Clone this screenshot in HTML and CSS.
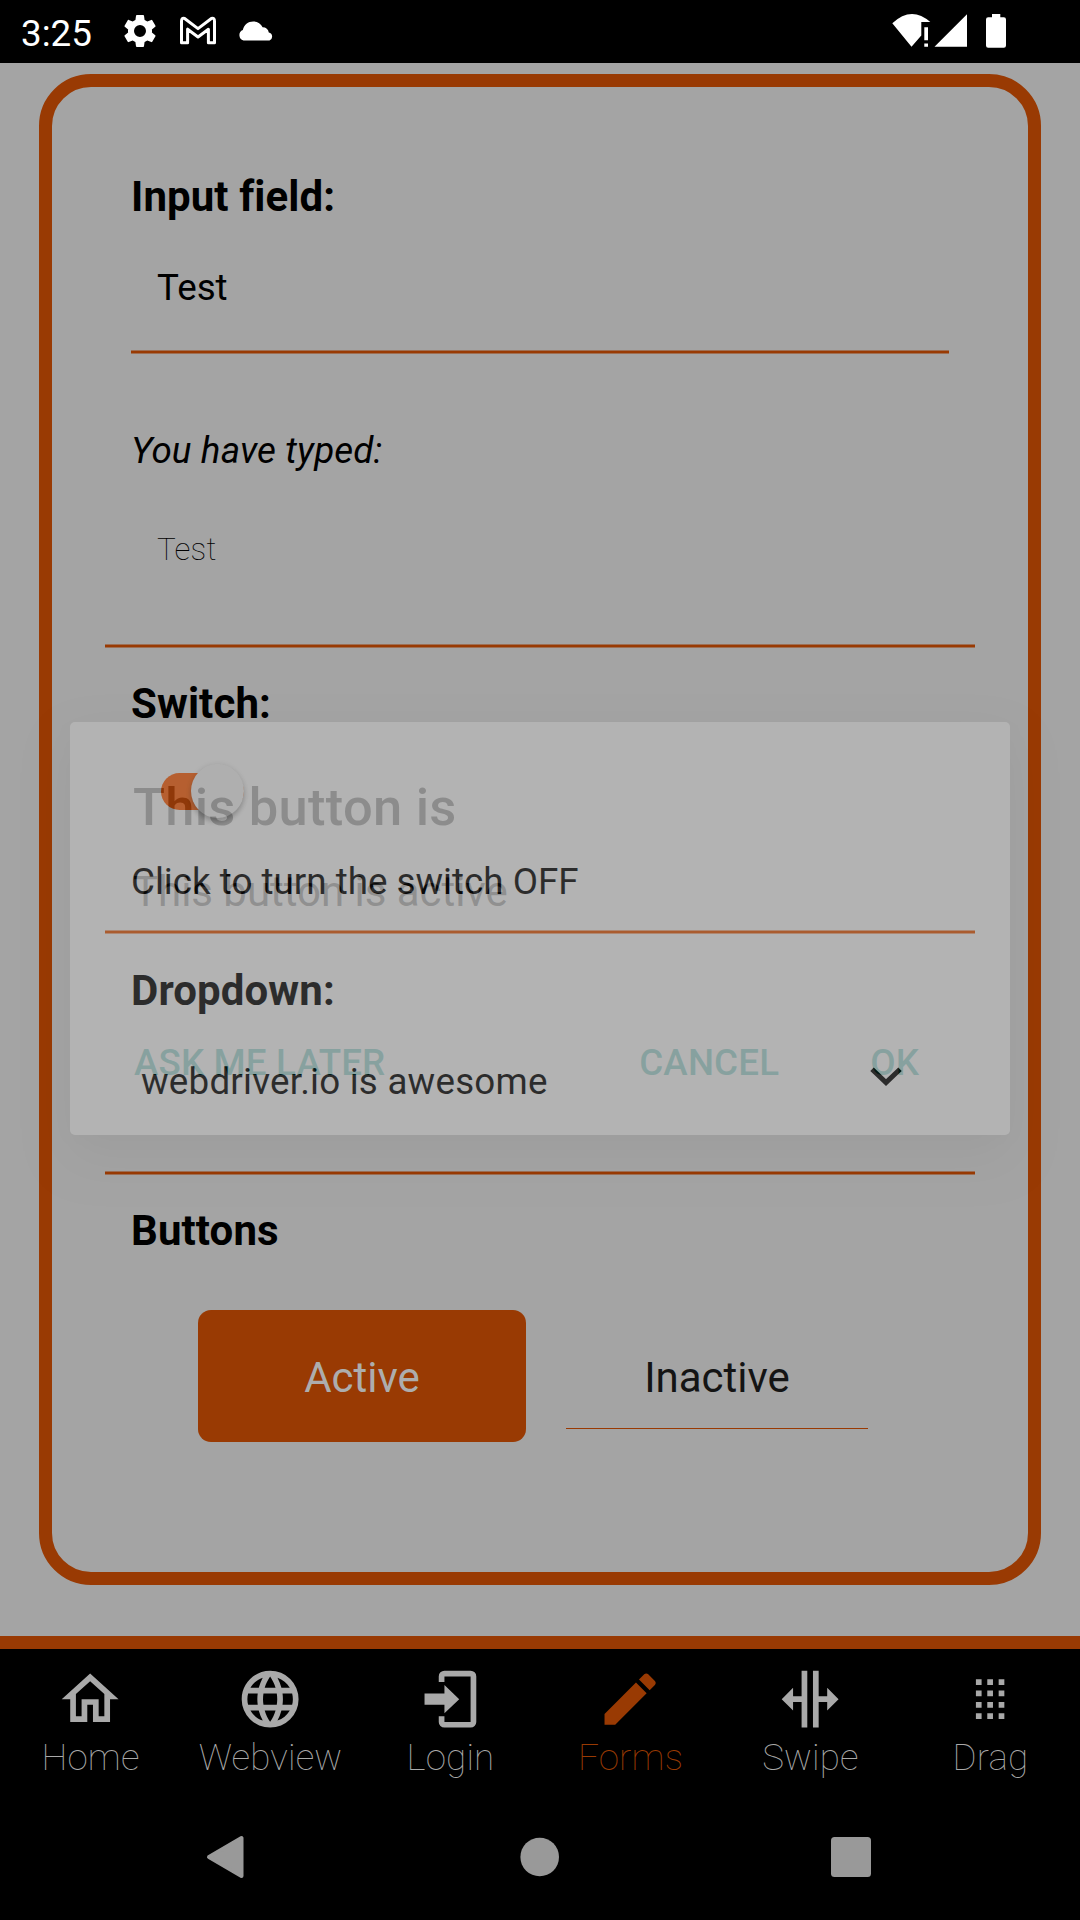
FILE: index.html
```html
<!DOCTYPE html>
<html lang="en">
<head>
<meta charset="utf-8">
<title>Forms</title>
<link rel="stylesheet" href="styles.css">
</head>
<body>
<div class="screen">
  <header class="status">
    <span class="time">3:25</span>
    <svg class="st-gear" width="40" height="40" viewBox="0 0 24 24"><path fill="#fff" fill-rule="evenodd" d="M19.14 12.94c.04-.3.06-.61.06-.94 0-.32-.02-.64-.07-.94l2.03-1.58a.49.49 0 0 0 .12-.61l-1.92-3.32a.488.488 0 0 0-.59-.22l-2.39.96c-.5-.38-1.03-.7-1.62-.94l-.36-2.54a.484.484 0 0 0-.48-.41h-3.84c-.24 0-.43.17-.47.41l-.36 2.54c-.59.24-1.13.57-1.62.94l-2.39-.96c-.22-.08-.47 0-.59.22L2.74 8.87c-.12.21-.08.47.12.61l2.03 1.58c-.05.3-.09.63-.09.94s.02.64.07.94l-2.03 1.58a.49.49 0 0 0-.12.61l1.92 3.32c.12.22.37.29.59.22l2.39-.96c.5.38 1.03.7 1.62.94l.36 2.54c.05.24.24.41.48.41h3.84c.24 0 .44-.17.47-.41l.36-2.54c.59-.24 1.13-.56 1.62-.94l2.39.96c.22.08.47 0 .59-.22l1.92-3.32c.12-.22.07-.47-.12-.61l-2.01-1.58zM12 15.6A3.6 3.6 0 1 1 12 8.4a3.6 3.6 0 0 1 0 7.2z"/></svg>
    <svg class="st-mail" width="38" height="30" viewBox="0 0 38 30"><path fill="none" stroke="#fff" stroke-width="3" stroke-linejoin="round" d="M2.500 5.200Q2.500 1.500 5.600 2.500L19 12.600 32.400 2.500Q35.500 1.500 35.500 5.200V26.800H29.400V13.200L19 21 8.600 13.200V26.800H2.500Z"/></svg>
    <svg class="st-cloud" width="36" height="20" viewBox="0 0 36 20"><path fill="#fff" d="M5.500 19.500A5.500 5.500 0 0 1 4.800 9.100C6 3.700 10 .4 15.200 .4C19.600 .4 22.800 2.700 24.600 6.300C28 6.300 30.300 8.300 30.800 11.500A4.200 4.200 0 0 1 31.500 19.500Z"/></svg>
    <svg class="st-signals" width="120" height="40" viewBox="890 11 120 40"><g fill="#fff"><path d="M892.300 23.200Q911.500 5.300 930.300 22H921.300V35.600L911.500 46.800Z"/><path d="M924.300 27.300h3.700v13h-3.700zM924.300 43.500h3.700v3.300h-3.700zM934.500 46.800L967 14.200V46.800Z"/><path d="M992 14h8.300v3.300h3.500q2.200 0 2.200 2.200V45.600q0 2.200-2.200 2.200H988.200q-2.200 0-2.200-2.200V19.500q0-2.200 2.200-2.200H992Z"/></g></svg>
  </header>

  <main class="page">
    <section class="card">
      <h2 class="label label-input">Input field:</h2>
      <div class="input">Test</div>
      <p class="typed">You have typed:</p>
      <p class="typed-value">Test</p>
      <hr class="rule rule-typed">
      <h2 class="label">Switch:</h2>
      <div class="toggle"><span class="thumb"></span></div>
      <p class="hint">Click to turn the switch OFF</p>
      <hr class="rule rule-hint">
      <h2 class="label label-dropdown">Dropdown:</h2>
      <div class="select"><span>webdriver.io is awesome</span>
        <svg width="32" height="20" viewBox="0 0 32 20"><path fill="none" stroke="#000" stroke-width="5" d="M2 2.300L16 15.600 30 2.300"/></svg>
      </div>
      <hr class="rule rule-select">
      <h2 class="label">Buttons</h2>
      <div class="buttons">
        <div class="btn btn-active">Active</div>
        <div class="btn btn-inactive">Inactive</div>
      </div>
    </section>
  </main>

  <nav class="tabs">
    <div class="tab"><svg viewBox="0 0 24 24"><path d="M12 5.690L17 10.190V18H15V12H9V18H7V10.190L12 5.690M12 3L2 12H5V20H11V14H13V20H19V12H22"/></svg><span>Home</span></div>
    <div class="tab"><svg viewBox="0 0 24 24"><path d="M16.360,14C16.440,13.340 16.500,12.680 16.500,12C16.500,11.320 16.440,10.660 16.360,10H19.740C19.900,10.640 20,11.310 20,12C20,12.690 19.900,13.360 19.740,14M14.590,19.560C15.190,18.450 15.650,17.250 15.970,16H18.920C17.960,17.650 16.430,18.930 14.590,19.560M14.340,14H9.660C9.560,13.340 9.500,12.680 9.500,12C9.500,11.320 9.560,10.650 9.660,10H14.340C14.430,10.650 14.500,11.320 14.500,12C14.500,12.680 14.430,13.340 14.340,14M12,19.960C11.170,18.760 10.500,17.430 10.090,16H13.910C13.500,17.430 12.830,18.760 12,19.960M8,8H5.080C6.030,6.340 7.570,5.060 9.400,4.440C8.800,5.550 8.350,6.750 8,8M5.080,16H8C8.350,17.250 8.800,18.450 9.400,19.560C7.570,18.930 6.030,17.650 5.080,16M4.260,14C4.100,13.360 4,12.690 4,12C4,11.310 4.100,10.640 4.260,10H7.640C7.560,10.660 7.500,11.320 7.500,12C7.500,12.680 7.560,13.340 7.640,14M12,4.030C12.830,5.230 13.500,6.570 13.910,8H10.090C10.500,6.570 11.170,5.230 12,4.030M18.920,8H15.970C15.650,6.750 15.190,5.550 14.590,4.440C16.430,5.070 17.960,6.340 18.920,8M12,2C6.470,2 2,6.500 2,12A10,10 0 0,0 12,22A10,10 0 0,0 22,12A10,10 0 0,0 12,2Z"/></svg><span>Webview</span></div>
    <div class="tab"><svg viewBox="0 0 24 24"><path d="M10 17V14H3V10H10V7L15.200 12L10 17M10 2H19.200A2 2 0 0 1 21.200 4V20A2 2 0 0 1 19.200 22H10A2 2 0 0 1 8 20V18H10V20H19.200V4H10V6H8V4A2 2 0 0 1 10 2Z"/></svg><span>Login</span></div>
    <div class="tab tab-on"><svg viewBox="0 0 24 24"><path d="M20.710,7.040C21.100,6.650 21.100,6 20.710,5.630L18.370,3.290C18,2.900 17.350,2.900 16.960,3.290L15.120,5.120L18.870,8.870M3,17.250V21H6.750L17.810,9.930L14.060,6.180L3,17.250Z"/></svg><span>Forms</span></div>
    <div class="tab"><svg viewBox="0 0 24 24"><path d="M18,16V13H15V22H13V2H15V11H18V8L22,12L18,16M2,12L6,16V13H9V22H11V2H9V11H6V8L2,12Z"/></svg><span>Swipe</span></div>
    <div class="tab"><svg viewBox="0 0 24 24"><path d="M7 5h2v2H7zM11 5h2v2h-2zM15 5h2v2h-2zM7 9h2v2H7zM11 9h2v2h-2zM15 9h2v2h-2zM7 13h2v2H7zM11 13h2v2h-2zM15 13h2v2h-2zM7 17h2v2H7zM11 17h2v2h-2zM15 17h2v2h-2z"/></svg><span>Drag</span></div>
  </nav>

  <footer class="system">
    <svg width="40" height="44" viewBox="0 0 40 44"><path fill="#999" stroke="#999" stroke-width="4" stroke-linejoin="round" d="M3 22L35.500 3V41Z"/></svg>
    <svg width="40" height="40" viewBox="0 0 40 40"><circle cx="20.700" cy="20" r="19.300" fill="#999"/></svg>
    <svg width="40" height="40" viewBox="0 0 40 40"><rect width="40" height="40" rx="3.500" fill="#999"/></svg>
  </footer>

  <div class="dialog">
    <div class="dialog-title">This button is</div>
    <div class="dialog-text">This button is active</div>
    <div class="dialog-actions"><span class="later">ASK ME LATER</span><span>CANCEL</span><span>OK</span></div>
  </div>
</div>
</body>
</html>
```
FILE: styles.css
```css
* { box-sizing: border-box; margin: 0; padding: 0; }
body { background: #000; font-family: Roboto, "Liberation Sans", sans-serif; }
svg { display: block; flex: none; }

.screen {
  position: relative;
  display: flex;
  flex-direction: column;
  width: 1080px;
  height: 1920px;
  overflow: hidden;
  background: #000;
  color: #000;
  font-size: 36.75px;
  line-height: 44px;
}

/* Status bar */
.status { display: flex; align-items: flex-start; height: 63px; color: #fff; }
.time { width: 98px; padding-left: 21px; margin-top: 12px; white-space: nowrap; }
.st-gear { margin: 11px 0 0 22px; }
.st-mail { margin: 16px 0 0 19px; }
.st-cloud { margin: 21px 0 0 21px; }
.st-signals { margin: 11px 70px 0 auto; }

/* Form page */
.page { height: 1573px; padding: 11px 39px 0; background: #a4a4a4; }
.card {
  height: 1511px;
  padding: 85px 53px 0;
  border: 13px solid #993a03;
  border-radius: 52px;
}
.label { margin: 31px 26px 0; font-size: 42px; line-height: 50px; font-weight: 700; letter-spacing: .1px; }
.label-input { margin-top: 0; }
.label-dropdown { margin-top: 32px; }
.input {
  height: 88px;
  margin: 44px 26px 0;
  padding-left: 26px;
  background: linear-gradient(#9e6f54 0 1px, #993a03 1px 3px, #9e6f54 3px) bottom / 100% 4px no-repeat;
}
.typed { margin: 75px 26px 0; font-style: italic; letter-spacing: .15px; }
.typed-value { margin: 57px 52px 0; font-size: 31.5px; line-height: 40px; font-weight: 100; letter-spacing: .2px; }
.rule {
  height: 4px;
  border: 0;
  background: linear-gradient(#9e6f54 0 1px, #993a03 1px 3px, #9e6f54 3px);
}
.rule-typed { margin-top: 74px; }
.toggle {
  width: 83px;
  height: 37px;
  margin: 44px 0 0 56px;
  border-radius: 19px;
  background: #a73e05;
  display: flex;
  align-items: center;
  justify-content: flex-end;
}
.thumb {
  width: 53px;
  height: 54px;
  margin-top: -2px;
  border-radius: 50%;
  background: #9f9f9f;
  box-shadow: 0 4px 5px rgba(0, 0, 0, .25), 0 0 6px rgba(0, 0, 0, .1);
}
.hint { margin: 50px 26px 0; }
.rule-hint { margin-top: 26px; }
.select { display: flex; justify-content: space-between; margin: 44px 73px 0 36px; letter-spacing: .22px; }
.select svg { margin-top: 7px; }
.rule-select { margin-top: 67px; }
.buttons { display: flex; gap: 40px; margin: 54px 0 0 93px; font-size: 42px; }
.btn { text-align: center; }
.btn-active {
  width: 328px;
  height: 132px;
  padding-top: 46px;
  border-radius: 13px;
  background: #993a03;
  color: #adadad;
}
.btn-inactive {
  width: 302px;
  height: 119px;
  padding-top: 46px;
  border-bottom: 1px solid #993a03;
  color: #141414;
}

/* Tab bar */
.tabs {
  display: grid;
  grid-template-columns: repeat(6, 180px);
  height: 158px;
  border-top: 13px solid #993a03;
  color: #a9a9a9;
}
.tab { display: flex; flex-direction: column; align-items: center; padding: 16px 0 0 1px; font-weight: 100; letter-spacing: .15px; }
.tab svg { width: 68.25px; height: 68.25px; fill: currentColor; }
.tab span { margin-top: 2.75px; }
.tab-on { color: #993a03; }

/* System navigation */
.system {
  display: flex;
  align-items: center;
  justify-content: space-between;
  height: 126px;
  padding: 0 209px 0 206px;
}

/* Alert fading in above the form */
.dialog {
  position: absolute;
  left: 70px;
  top: 722px;
  width: 940px;
  height: 413px;
  padding: 54px 63px 0;
  border-radius: 5px;
  background: #fff;
  box-shadow: 0 22px 50px rgba(0, 0, 0, .22), 0 0 20px rgba(0, 0, 0, .06);
  opacity: .172;
}
.dialog-title { font-size: 52.5px; line-height: 62px; font-weight: 500; color: #212121; letter-spacing: .25px; }
.dialog-text { margin-top: 29px; font-size: 42px; line-height: 50px; color: #333; letter-spacing: -.03px; }
.dialog-actions {
  display: flex;
  gap: 91px;
  margin: 124px 0 0 1px;
  padding-right: 28px;
  font-weight: 500;
  letter-spacing: .15px;
  color: #009688;
}
.later { margin-right: auto; }
```
